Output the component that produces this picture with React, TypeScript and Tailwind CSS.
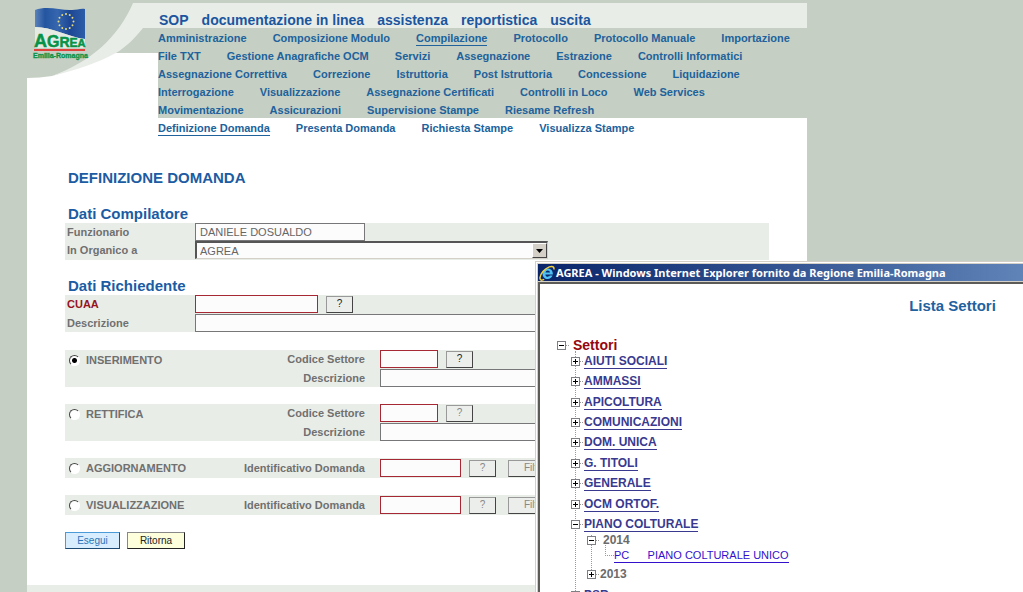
import React from "react";

const TOP_LINKS = ["SOP", "documentazione in linea", "assistenza", "reportistica", "uscita"];
const MENU: string[][] = [
  ["Amministrazione", "Composizione Modulo", "Compilazione", "Protocollo", "Protocollo Manuale", "Importazione"],
  ["File TXT", "Gestione Anagrafiche OCM", "Servizi", "Assegnazione", "Estrazione", "Controlli Informatici"],
  ["Assegnazione Correttiva", "Correzione", "Istruttoria", "Post Istruttoria", "Concessione", "Liquidazione"],
  ["Interrogazione", "Visualizzazione", "Assegnazione Certificati", "Controlli in Loco", "Web Services"],
  ["Movimentazione", "Assicurazioni", "Supervisione Stampe", "Riesame Refresh"],
];
const SUBMENU = ["Definizione Domanda", "Presenta Domanda", "Richiesta Stampe", "Visualizza Stampe"];
const SECTORS = [
  "AIUTI SOCIALI",
  "AMMASSI",
  "APICOLTURA",
  "COMUNICAZIONI",
  "DOM. UNICA",
  "G. TITOLI",
  "GENERALE",
  "OCM ORTOF.",
  "PIANO COLTURALE",
];
const STARS = Array.from({ length: 12 }, (_, i) => i * 30);

function MenuRow({ items, active }: { items: string[]; active?: string }) {
  return (
    <div className="flex h-[18px] items-end gap-[26px] whitespace-nowrap text-[11px] font-bold leading-[14px] text-[#20629c]">
      {items.map((t) => (
        <a key={t} href="#" className={t === active ? "border-b border-[#20629c]" : "border-b border-transparent"}>
          {t}
        </a>
      ))}
    </div>
  );
}

function Emblem() {
  return (
    <svg className="block h-20 w-[131px] shrink-0" viewBox="27 0 131 80" role="img" aria-label="AGREA">
      <defs>
        <linearGradient id="flag" x1="0" x2="1">
          <stop offset="0" stopColor="#5b83bb" />
          <stop offset=".2" stopColor="#2455a0" />
          <stop offset=".45" stopColor="#3566ae" />
          <stop offset=".7" stopColor="#1d4794" />
          <stop offset="1" stopColor="#2e5da8" />
        </linearGradient>
      </defs>
      <rect x="27" y="0" width="131" height="53" fill="#c5cfc3" />
      <path d="M27 0H134V3C117 42 82 68 52 76C44 77 35 78 27 78Z" fill="#c5cfc3" />
      <path d="M133 3H158V28H143C134 39 126 47 116 53C98 63 76 70 52 76C90 62 118 38 133 3Z" fill="#e9ede8" />
      <path d="M35 10C48 5 62 11 72 10C77 10 81 8 85 9V39C68 37 52 27 35 27Z" fill="url(#flag)" />
      <path d="M35 27C52 27 68 37 85 39V48H35Z" fill="#e5ebe3" />
      {STARS.map((a) => (
        <circle key={a} cx="66" cy="14" r="1" fill="#e8dc7a" transform={`rotate(${a} 66 21.5)`} />
      ))}
      <g fontFamily="Liberation Sans, sans-serif" fontWeight="700" fill="#079347" stroke="#079347">
        <text x="34" y="47" strokeWidth=".5">
          <tspan fontSize="18">A</tspan>
          <tspan fontSize="16">G</tspan>
          <tspan fontSize="14">R</tspan>
          <tspan fontSize="12">E</tspan>
          <tspan fontSize="11">A</tspan>
        </text>
        <text x="33" y="58" fontSize="7" strokeWidth=".3">
          Emilia-Romagna
        </text>
      </g>
      <rect x="34" y="49" width="51" height="2" fill="#e2403a" />
    </svg>
  );
}

const grayBox = "h-[18px] border border-[#77777a] bg-[#fcfcfc] px-1 text-[11px] font-normal text-[#666] outline-none";
const redBox = "h-[18px] border border-[#a52834] bg-[#fcfcfc] px-1 text-[11px] font-normal text-[#666] outline-none";

function Push({ children, disabled, wide, label }: { children: React.ReactNode; disabled?: boolean; wide?: boolean; label?: string }) {
  return (
    <button
      type="button"
      disabled={disabled}
      aria-label={label}
      className={`h-[17px] shrink-0 border border-[#999] border-b-[#444] border-r-[#444] bg-[#eceeeb] text-[10px] font-normal leading-none text-[#222] disabled:text-[#888] ${
        wide ? "ml-1 w-[54px]" : "w-[27px]"
      }`}
    >
      {children}
    </button>
  );
}

function Mode({ name, checked, children }: { name: string; checked?: boolean; children: React.ReactNode }) {
  return (
    <div className="flex bg-[#e9ede8]">
      <label className="flex h-[20px] w-[140px] shrink-0 items-center gap-[6px] pl-1">
        <input
          type="radio"
          name="modo"
          defaultChecked={checked}
          className="size-[11px] appearance-none rounded-full border border-white border-l-[#444] border-t-[#444] bg-white checked:bg-[radial-gradient(circle,#000_2px,#fff_3px)]"
        />
        {name}
      </label>
      <div className="flex grow flex-col gap-px">{children}</div>
    </div>
  );
}

function Field({ id, label, children }: { id: string; label: string; children: React.ReactNode }) {
  return (
    <div className="flex items-center">
      <label htmlFor={id} className="w-[160px] shrink-0 text-right">
        {label}
      </label>
      <div className="ml-[15px] flex grow items-center gap-2">{children}</div>
    </div>
  );
}

function SectorFields({ prefix, disabled }: { prefix: string; disabled?: boolean }) {
  return (
    <>
      <Field id={`${prefix}-codice`} label="Codice Settore">
        <input id={`${prefix}-codice`} className={`${redBox} w-[58px]`} />
        <Push disabled={disabled} label="Cerca settore">?</Push>
      </Field>
      <Field id={`${prefix}-descrizione`} label="Descrizione">
        <input id={`${prefix}-descrizione`} className={`${grayBox} w-full max-w-[360px]`} />
      </Field>
    </>
  );
}

function RequestField({ prefix }: { prefix: string }) {
  return (
    <div className="py-px">
      <Field id={`${prefix}-id`} label="Identificativo Domanda">
        <input id={`${prefix}-id`} className={`${redBox} w-[81px]`} />
        <Push disabled label="Cerca domanda">?</Push>
        <Push disabled wide>Filtro</Push>
      </Field>
    </div>
  );
}

function Toggle({ open }: { open?: boolean }) {
  return (
    <svg className="relative size-[9px] shrink-0" viewBox="0 0 9 9" aria-hidden="true" shapeRendering="crispEdges">
      <rect width="9" height="9" fill="#7d7f85" />
      <rect x="1" y="1" width="7" height="7" fill="#fff" />
      <rect x="2" y="4" width="5" height="1" fill="#000" />
      {!open && <rect x="4" y="2" width="1" height="5" fill="#000" />}
    </svg>
  );
}

function Dash() {
  return <span className="w-[3px] shrink-0 border-t border-dotted border-[#999]" />;
}

function BrowserIcon() {
  return (
    <svg className="size-4 shrink-0" viewBox="0 0 16 16" aria-hidden="true">
      <path d="M13.6 10.6C12.6 13 10.8 14 8.7 14C5.7 14 3.6 11.8 3.6 8.7C3.6 5.6 5.8 3.4 8.8 3.4C11.9 3.4 14 5.6 13.9 9.4H6.4C6.5 10.9 7.5 11.8 8.8 11.8C9.8 11.8 10.4 11.4 10.8 10.6ZM6.5 7.5H11C10.8 6.2 10 5.5 8.8 5.5C7.6 5.5 6.7 6.2 6.5 7.5Z" fill="#4fc0f2" />
      <path d="M15 4.5C15.3 1.8 13.3 .8 10.3 1.9C5.6 3.6 1.1 9 .9 12.9C.8 15.3 2.7 15.7 5.2 14.4" fill="none" stroke="#f0cf3f" strokeWidth="1.5" />
    </svg>
  );
}

function SectorWindow() {
  return (
    <section
      aria-label="Lista Settori"
      className="absolute bottom-0 left-[535px] top-[261px] flex w-[830px] flex-col border-l border-t border-[#d4d0c8] bg-[#d4d0c8]"
    >
      <div className="flex min-h-0 grow flex-col border-l border-t border-white pl-px pt-px">
        <div className="flex h-[17px] shrink-0 items-center gap-px bg-gradient-to-r from-[#0a246a] to-[#a6caf0] pl-px font-['Noto_Sans',sans-serif] text-[11px] font-bold leading-[16px] text-white">
          <BrowserIcon />
          AGREA - Windows Internet Explorer fornito da Regione Emilia-Romagna
        </div>
        <div className="mt-px min-h-0 grow overflow-hidden border-l-2 border-t-2 border-[#5c5b57] bg-white pt-[12px]">
          <h2 className="text-center text-[15px] font-bold leading-5 text-[#1f629f]">Lista Settori</h2>
          <div className="mt-[23px] text-xs font-bold">
            <div className="flex h-[12px] items-center pl-[17px] text-[14px] leading-3 text-[#96060f]">
              <Toggle open />
              <Dash />
              <span className="ml-1">Settori</span>
            </div>
            <div className="relative">
              <span className="absolute bottom-0 left-[35px] top-0 border-l border-dotted border-[#999]" />
              <ul className="grid h-[184px]">
                {SECTORS.map((s) => (
                  <li key={s} className="flex items-center pl-[31px] leading-[14px]">
                    <Toggle open={s === "PIANO COLTURALE"} />
                    <Dash />
                    <a href="#" className="ml-px border-b border-[#39398f] text-[#39398f]">
                      {s}
                    </a>
                  </li>
                ))}
              </ul>
              <div className="relative text-[#6b6b6b]">
                <span className="absolute bottom-[7px] left-[51px] top-0 border-l border-dotted border-[#999]" />
                <div className="flex h-[10px] items-center pl-[47px] leading-[10px]">
                  <Toggle open />
                  <Dash />
                  <span className="ml-1">2014</span>
                </div>
                <div className="flex h-[22px] pl-[65px]">
                  <span className="h-[11px] w-[9px] border-b border-l border-dotted border-[#999]" />
                  <a href="#" className="self-center whitespace-pre border-b border-[#3311cc] text-[11px] font-normal leading-[13px] text-[#3311cc]">
                    {"PC\u00a0\u00a0\u00a0\u00a0\u00a0\u00a0PIANO COLTURALE UNICO"}
                  </a>
                </div>
                <div className="flex h-[14px] items-center pl-[47px] leading-[14px]">
                  <Toggle />
                  <Dash />
                  <span className="ml-px">2013</span>
                </div>
              </div>
              <div className="flex h-[28px] items-center pl-[31px] leading-[14px]">
                <Toggle />
                <Dash />
                <a href="#" className="ml-px border-b border-[#39398f] text-[#39398f]">PSR</a>
              </div>
            </div>
          </div>
        </div>
      </div>
    </section>
  );
}

export default function App() {
  return (
    <div className="relative h-screen overflow-hidden bg-[#c5cfc3] font-['Liberation_Sans',Arial,sans-serif]">
      <div className="ml-[27px] flex min-h-full max-w-[780px] flex-col bg-white">
        <header className="flex">
          <Emblem />
          <div className="grow">
            <div className="h-[3px] bg-[#c5cfc3]" />
            <nav className="flex h-[25px] items-end gap-[13px] bg-[#e9ede8] pl-px text-[14px] font-bold leading-4 text-[#1a569f]">
              {TOP_LINKS.map((t) => (
                <a key={t} href="#">
                  {t}
                </a>
              ))}
            </nav>
            <nav>
              <div className="bg-[#c5cfc3]">
                {MENU.map((row) => (
                  <MenuRow key={row[0]} items={row} active="Compilazione" />
                ))}
              </div>
              <MenuRow items={SUBMENU} active="Definizione Domanda" />
            </nav>
          </div>
        </header>

        <form className="mt-[32px] px-[38px] text-[11px] font-bold text-[#707070]" onSubmit={(e) => e.preventDefault()}>
          <h1 className="pl-[3px] text-[15px] leading-5 text-[#1b5ca3]">DEFINIZIONE DOMANDA</h1>

          <h2 className="mt-4 pl-[3px] text-[15px] leading-[19px] text-[#1b5ca3]">Dati Compilatore</h2>
          <div className="flex flex-col bg-[#e9ede8] pb-px pl-0.5">
            <div className="flex items-center">
              <label htmlFor="funzionario" className="w-[128px]">Funzionario</label>
              <input id="funzionario" defaultValue="DANIELE DOSUALDO" className={`${grayBox} w-[170px]`} />
            </div>
            <div className="flex items-center">
              <label htmlFor="organico" className="w-[128px]">In Organico a</label>
              <div className="relative w-[353px]">
                <select
                  id="organico"
                  className="block h-[18px] w-full appearance-none border border-l-2 border-t-2 border-[#d4d0c8] border-l-[#555] border-t-[#555] bg-[#fcfcfc] px-[3px] text-[11px] font-normal text-[#666]"
                >
                  <option>AGREA</option>
                </select>
                <span className="pointer-events-none absolute right-px top-0.5 flex h-[15px] w-[15px] items-center justify-center border border-white border-b-[#444] border-r-[#444] bg-[#d4d0c8]">
                  <svg className="h-1 w-[7px]" viewBox="0 0 7 4" aria-hidden="true">
                    <path d="M0 0H7L3.5 4Z" fill="#000" />
                  </svg>
                </span>
              </div>
            </div>
          </div>

          <h2 className="mt-4 pl-[3px] text-[15px] leading-[19px] text-[#1b5ca3]">Dati Richiedente</h2>
          <div className="flex flex-col gap-px bg-[#e9ede8] pl-0.5">
            <div className="flex items-center">
              <label htmlFor="cuaa" className="w-[128px] text-[#96141f]">CUAA</label>
              <input id="cuaa" className={`${redBox} mr-2 w-[123px]`} />
              <Push label="Cerca CUAA">?</Push>
            </div>
            <div className="flex items-center">
              <label htmlFor="descrizione" className="w-[128px]">Descrizione</label>
              <input id="descrizione" className={`${grayBox} w-full max-w-[480px]`} />
            </div>
          </div>

          <div className="mt-[18px] flex flex-col gap-[17px]">
            <Mode name="INSERIMENTO" checked>
              <SectorFields prefix="inserimento" />
            </Mode>
            <Mode name="RETTIFICA">
              <SectorFields prefix="rettifica" disabled />
            </Mode>
            <Mode name="AGGIORNAMENTO">
              <RequestField prefix="aggiornamento" />
            </Mode>
            <Mode name="VISUALIZZAZIONE">
              <RequestField prefix="visualizzazione" />
            </Mode>
          </div>

          <div className="mt-[17px] flex gap-[7px]">
            <button type="submit" className="h-[17px] w-[55px] border border-[#4a9bd8] border-b-[#1d4a72] border-r-[#1d4a72] bg-[#d8eefe] text-[10px] font-normal leading-none text-[#2b74b8]">
              Esegui
            </button>
            <button type="button" className="h-[17px] w-[58px] border border-[#888] border-b-[#222] border-r-[#222] bg-[#fdfedb] text-[10px] font-normal leading-none text-[#222]">
              Ritorna
            </button>
          </div>
        </form>
        <footer className="mt-auto h-[7px] bg-[#e9ede8]" />
      </div>

      <SectorWindow />
    </div>
  );
}
